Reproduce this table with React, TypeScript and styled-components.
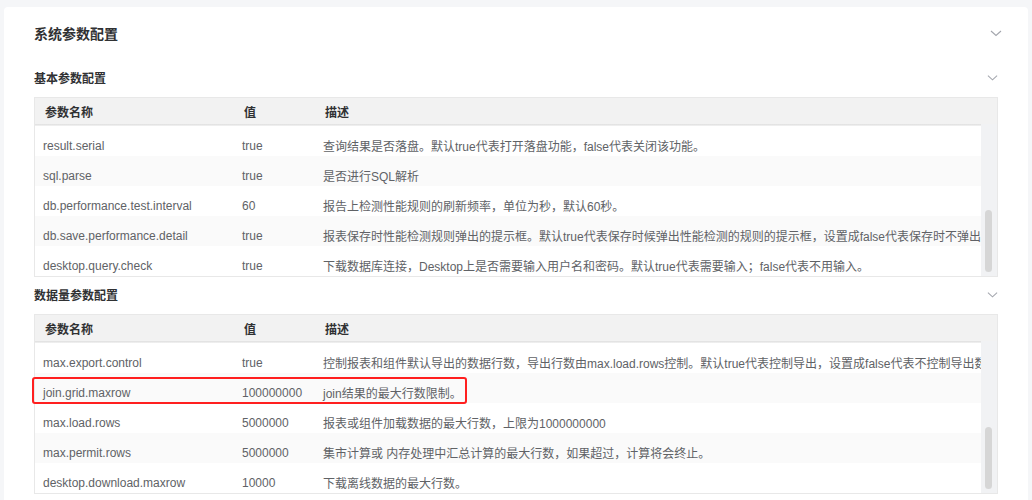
import React from "react";
import styled, { createGlobalStyle } from "styled-components";

const GlobalStyle = createGlobalStyle`
  html, body { margin: 0; padding: 0; background: #f5f6f8; }
  body {
    font-family: "Liberation Sans", "Noto Sans CJK SC", "Microsoft YaHei", sans-serif;
    -webkit-font-smoothing: antialiased;
  }
  * { box-sizing: border-box; }
`;

const Page = styled.div`
  padding: 7px 4px 0 4px;
  height: 500px;
  overflow: hidden;
`;

const Card = styled.div`
  background: #fff;
  border-radius: 4px;
  padding: 15px 26px 0 30px;
  min-height: 520px;
`;

const TitleRow = styled.div`
  display: flex;
  align-items: center;
  justify-content: space-between;
  height: 22px;
`;

const Title = styled.div`
  font-size: 14px;
  font-weight: 700;
  color: #303133;
`;

const SectionBody = styled.div`
  padding-right: 4px;
  margin-top: 23px;
`;

const SubHeader = styled.div<{ $first?: boolean }>`
  display: flex;
  align-items: center;
  justify-content: space-between;
  height: 20px;
  margin-top: ${(p) => (p.$first ? "0" : "7px")};
  margin-bottom: 10px;
`;

const SubTitle = styled.div`
  font-size: 12px;
  font-weight: 700;
  color: #303133;
`;

const Chevron = styled.svg<{ $size: number }>`
  width: ${(p) => p.$size}px;
  height: ${(p) => p.$size}px;
  flex: none;
`;

const TableWrap = styled.div`
  position: relative;
  border: 1px solid #e8e8e8;
`;

const HeaderRow = styled.div`
  display: grid;
  grid-template-columns: 199px 81px 1fr;
  height: 26px;
  align-items: center;
  padding-top: 1px;
  background: #f2f2f2;
  font-size: 12px;
  font-weight: 700;
  color: #303133;
`;

const HeadCell = styled.div`
  padding-left: 10px;
`;

const Body = styled.div`
  display: flex;
`;

const RowsCol = styled.div`
  flex: 1;
  min-width: 0;
`;

const HeadShadow = styled.div`
  height: 2px;
  background: linear-gradient(#dedede, #f3f3f3);
`;

const Row = styled.div<{ $striped: boolean }>`
  display: grid;
  grid-template-columns: 199px 81px 1fr;
  height: 30px;
  align-items: center;
  padding-top: 9px;
  background: ${(p) => (p.$striped ? "#fafafa" : "#fff")};
  font-size: 12px;
  color: #606266;
`;

const Cell = styled.div`
  padding-left: 8px;
  white-space: nowrap;
  overflow: hidden;
`;

const Track = styled.div`
  width: 16px;
  background: #f1f2f4;
  display: flex;
  flex-direction: column;
  justify-content: flex-end;
  padding: 0 0 4px 4px;
`;

const Thumb = styled.div`
  width: 7px;
  height: 62px;
  border-radius: 4px;
  background: #d6d6d6;
`;

const Highlight = styled.div`
  position: absolute;
  left: -3px;
  top: 62px;
  width: 435px;
  height: 27px;
  border: 2px solid #ff1f1f;
  border-radius: 3px;
  pointer-events: none;
`;

const ChevronIcon = ({ size }: { size: number }) => (
  <Chevron $size={size} viewBox="0 0 12 12" fill="none">
    <path d="M1 4 L6 8.5 L11 4" stroke="#a3a6ad" strokeWidth="1.1" />
  </Chevron>
);

type Item = { name: string; value: string; desc: string };

const basic: Item[] = [
  { name: "result.serial", value: "true", desc: "查询结果是否落盘。默认true代表打开落盘功能，false代表关闭该功能。" },
  { name: "sql.parse", value: "true", desc: "是否进行SQL解析" },
  { name: "db.performance.test.interval", value: "60", desc: "报告上检测性能规则的刷新频率，单位为秒，默认60秒。" },
  {
    name: "db.save.performance.detail",
    value: "true",
    desc: "报表保存时性能检测规则弹出的提示框。默认true代表保存时候弹出性能检测的规则的提示框，设置成false代表保存时不弹出该提示框。",
  },
  {
    name: "desktop.query.check",
    value: "true",
    desc: "下载数据库连接，Desktop上是否需要输入用户名和密码。默认true代表需要输入；false代表不用输入。",
  },
];

const volume: Item[] = [
  {
    name: "max.export.control",
    value: "true",
    desc: "控制报表和组件默认导出的数据行数，导出行数由max.load.rows控制。默认true代表控制导出，设置成false代表不控制导出数据行数。",
  },
  { name: "join.grid.maxrow", value: "100000000", desc: "join结果的最大行数限制。" },
  { name: "max.load.rows", value: "5000000", desc: "报表或组件加载数据的最大行数，上限为1000000000" },
  { name: "max.permit.rows", value: "5000000", desc: "集市计算或 内存处理中汇总计算的最大行数，如果超过，计算将会终止。" },
  { name: "desktop.download.maxrow", value: "10000", desc: "下载离线数据的最大行数。" },
];

const ParamTable = ({ items, highlight }: { items: Item[]; highlight?: boolean }) => (
  <TableWrap>
    <HeaderRow>
      <HeadCell>参数名称</HeadCell>
      <HeadCell>值</HeadCell>
      <HeadCell>描述</HeadCell>
    </HeaderRow>
    <Body>
      <RowsCol>
        <HeadShadow />
        {items.map((it, i) => (
          <Row key={it.name} $striped={i % 2 === 1}>
            <Cell>{it.name}</Cell>
            <Cell>{it.value}</Cell>
            <Cell>{it.desc}</Cell>
          </Row>
        ))}
      </RowsCol>
      <Track>
        <Thumb />
      </Track>
    </Body>
    {highlight && <Highlight />}
  </TableWrap>
);

export default function App() {
  return (
    <>
      <GlobalStyle />
      <Page>
        <Card>
          <TitleRow>
            <Title>系统参数配置</Title>
            <ChevronIcon size={12} />
          </TitleRow>
          <SectionBody>
            <SubHeader $first>
              <SubTitle>基本参数配置</SubTitle>
              <ChevronIcon size={11} />
            </SubHeader>
            <ParamTable items={basic} />
            <SubHeader>
              <SubTitle>数据量参数配置</SubTitle>
              <ChevronIcon size={11} />
            </SubHeader>
            <ParamTable items={volume} highlight />
          </SectionBody>
        </Card>
      </Page>
    </>
  );
}
